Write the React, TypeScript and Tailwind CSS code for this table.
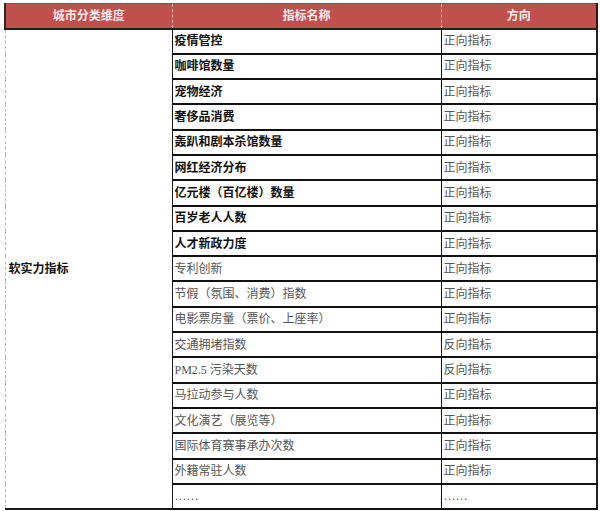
import React from "react";

interface Row {
  name: string;
  dir: string;
  bold?: boolean;
}

const rows: Row[] = [
  { name: "疫情管控", dir: "正向指标", bold: true },
  { name: "咖啡馆数量", dir: "正向指标", bold: true },
  { name: "宠物经济", dir: "正向指标", bold: true },
  { name: "奢侈品消费", dir: "正向指标", bold: true },
  { name: "轰趴和剧本杀馆数量", dir: "正向指标", bold: true },
  { name: "网红经济分布", dir: "正向指标", bold: true },
  { name: "亿元楼（百亿楼）数量", dir: "正向指标", bold: true },
  { name: "百岁老人人数", dir: "正向指标", bold: true },
  { name: "人才新政力度", dir: "正向指标", bold: true },
  { name: "专利创新", dir: "正向指标" },
  { name: "节假（氛围、消费）指数", dir: "正向指标" },
  { name: "电影票房量（票价、上座率）", dir: "正向指标" },
  { name: "交通拥堵指数", dir: "反向指标" },
  { name: "PM2.5 污染天数", dir: "反向指标" },
  { name: "马拉动参与人数", dir: "正向指标" },
  { name: "文化演艺（展览等）", dir: "正向指标" },
  { name: "国际体育赛事承办次数", dir: "正向指标" },
  { name: "外籍常驻人数", dir: "正向指标" },
  { name: "……", dir: "……" },
];

const App = () => {
  return (
    <div
      className="w-[600px] h-[511px] bg-white pt-[3px] pl-[4px]"
      style={{ fontFamily: '"Liberation Serif", "Noto Sans CJK SC", serif' }}
    >
      <table className="border-collapse table-fixed w-[592px] text-[12px] leading-none">
        <colgroup>
          <col className="w-[167px]" />
          <col className="w-[269px]" />
          <col className="w-[156px]" />
        </colgroup>
        <thead>
          <tr className="h-[25px] bg-[#c0504d] text-[#fbeaea]">
            <th className="border-l-2 border-l-[#3a2020] border-r border-r-[#e8b8b6] [border-right-style:dashed] border-b-2 border-b-[#2a1a1a] border-t border-t-[#a04040] font-bold">
              城市分类维度
            </th>
            <th className="border-r border-r-[#e8b8b6] [border-right-style:dashed] border-b-2 border-b-[#2a1a1a] border-t border-t-[#a04040] font-bold">
              指标名称
            </th>
            <th className="border-r-2 border-r-[#2a1a1a] border-b-2 border-b-[#2a1a1a] border-t border-t-[#a04040] font-bold">
              方向
            </th>
          </tr>
        </thead>
        <tbody>
          {rows.map((r, i) => (
            <tr key={i} className="h-[25.3px]">
              {i === 0 && (
                <td
                  rowSpan={rows.length}
                  className="border-l border-l-[#b8b8b8] [border-left-style:dashed] border-b-2 border-b-[#1a1a1a] border-r-[1.5px] border-r-[#1a1a1a] pl-[3px] align-middle font-bold text-[#111]"
                >
                  软实力指标
                </td>
              )}
              <td
                className={`border-b-2 border-b-[#111] border-r-[1.5px] border-r-[#111] pl-[2px] ${
                  r.bold ? "font-bold text-[#111]" : "text-[#555]"
                }`}
              >
                {r.name}
              </td>
              <td className="border-b-2 border-b-[#111] border-r-2 border-r-[#222] pl-[2px] text-[#555]">
                {r.dir}
              </td>
            </tr>
          ))}
        </tbody>
      </table>
    </div>
  );
};

export default App;
